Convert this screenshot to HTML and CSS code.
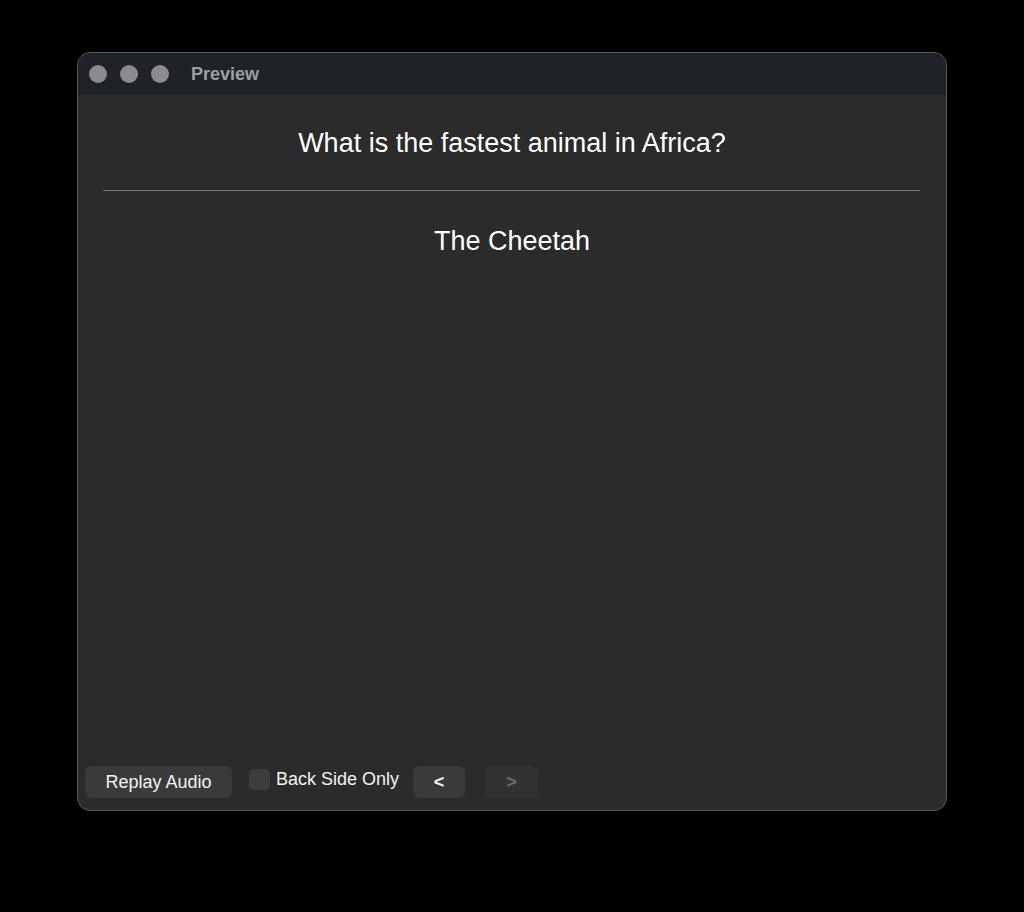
FILE: index.html
```html
<!DOCTYPE html>
<html lang="en">
<head>
    <meta charset="utf-8">
    <meta name="viewport" content="width=device-width, initial-scale=1">
    <title>Preview</title>

    <link rel="stylesheet" href="styles.css">
</head>
<body>

<div class="window">
    <div class="titlebar">
        <span class="light"></span>
        <span class="light"></span>
        <span class="light"></span>
        <span class="title">Preview</span>
    </div>

    <div class="card">
        <div class="question">What is the fastest animal in Africa?</div>
        <hr>
        <div class="answer">The Cheetah</div>
    </div>

    <div class="controls">
        <button class="btn replay">Replay Audio</button>
        <label class="check">
            <span class="box"></span>
            Back Side Only
        </label>
        <button class="btn nav">&lt;</button>
        <button class="btn nav" disabled>&gt;</button>
    </div>
</div>

</body>
</html>
```

FILE: styles.css
```css
body {
    margin: 0;
    background-color: #000;
    font-family: "Liberation Sans", Arial, sans-serif;
}
.window {
    display: flex;
    flex-direction: column;
    box-sizing: border-box;
    width: 870px;
    height: 759px;
    margin: 52px 0 0 77px;
    background-color: #2b2b2b;
    border: 1px solid #5a5a5a;
    border-radius: 13px;
    overflow: hidden;
}
.titlebar {
    display: flex;
    align-items: center;
    height: 42px;
    padding-left: 11px;
    background-color: #1f2226;
}
.light {
    width: 18px;
    height: 18px;
    margin-right: 13px;
    border-radius: 50%;
    background-color: #8b8b8b;
}
.title {
    margin-left: 9px;
    color: #9b9fa4;
    font-size: 18px;
    font-weight: 700;
}
.card {
    flex: 1;
    color: #fff;
    font-size: 27px;
    text-align: center;
}
.question {
    padding-top: 33px;
    line-height: 31px;
}
hr {
    margin: 31px 26px 0 25px;
    border: 0;
    border-top: 1px solid #777;
}
.answer {
    padding-top: 35px;
    line-height: 31px;
}
.controls {
    display: flex;
    align-items: center;
    padding: 0 0 12px 7px;
}
.btn {
    height: 32px;
    border: unset;
    border-radius: 6px;
    background-color: #3a3a3a;
    color: #f2f2f2;
    font-family: inherit;
    font-size: 18px;
}
.replay {
    width: 147px;
}
.nav {
    width: 52px;
    margin-left: 14px;
    font-weight: 700;
}
.nav + .nav {
    width: 53px;
    margin-left: 20px;
}
.btn:disabled {
    background-color: #323232;
    color: #6a6a6a;
}
.check {
    display: flex;
    align-items: center;
    gap: 6px;
    margin: 0 0 5px 17px;
    color: #f2f2f2;
    font-size: 18px;
}
.box {
    width: 21px;
    height: 21px;
    border-radius: 5px;
    background-color: #3d3d3d;
}
```
